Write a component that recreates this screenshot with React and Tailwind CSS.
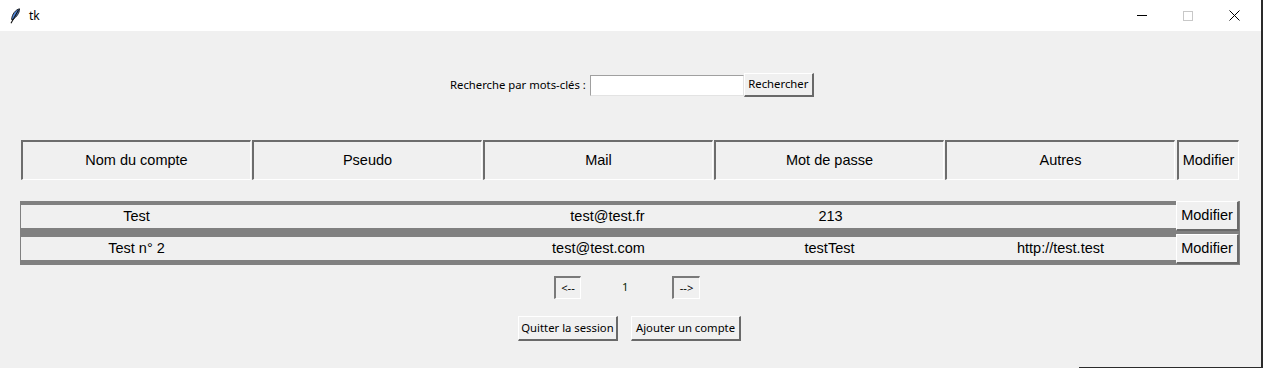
import React from 'react';

const ui = { fontFamily: '"Noto Sans", "Open Sans", sans-serif' };
const arial = { fontFamily: '"Liberation Sans", Arial, sans-serif' };

const columns = ['Nom du compte', 'Pseudo', 'Mail', 'Mot de passe', 'Autres'];

const rows = [
  { cells: ['Test', '', 'test@test.fr', '213', ''], shift: [0, 0, 18, 2, 0] },
  { cells: ['Test n° 2', '', 'test@test.com', 'testTest', 'http://test.test'], shift: [0, 0, 0, 0, 0] },
];

function Feather() {
  return (
    <svg width="12" height="16" viewBox="0 0 12 16">
      <path d="M10.5 0.8 C6.5 1.8 3 6 2.6 11.5 L4.2 11.5 C7.5 8.5 10.5 5.5 10.5 0.8 Z" fill="#4f86d8" stroke="#111" strokeWidth="0.9" />
      <path d="M9.5 2 L2 15.2" stroke="#111" strokeWidth="1.1" />
    </svg>
  );
}

function RaisedButton({ children, className = '' }) {
  return (
    <div
      className={`flex items-center justify-center whitespace-nowrap bg-[#f0f0f0] border-t border-l border-white border-r-2 border-b-2 border-r-[#696969] border-b-[#696969] text-[11.3px] text-black ${className}`}
      style={ui}
    >
      {children}
    </div>
  );
}

function SunkenButton({ children, className = '' }) {
  return (
    <div
      className={`flex items-center justify-center whitespace-nowrap bg-[#f0f0f0] border-t-2 border-l-2 border-[#7a7a7a] border-r border-b border-r-white border-b-white text-[11.3px] text-black ${className}`}
      style={ui}
    >
      {children}
    </div>
  );
}

export default function App() {
  return (
    <div className="w-[1263px] h-[368px] flex flex-col bg-[#f0f0f0] overflow-hidden">
      <div className="flex flex-1">
        <div className="w-[1261px] flex flex-col">
          {/* title bar */}
          <div className="h-[31px] bg-white flex items-center">
            <div className="ml-[8px] w-[13px] flex justify-center">
              <Feather />
            </div>
            <span className="ml-[8px] text-[12px] text-black" style={ui}>tk</span>
            <div className="ml-auto flex h-full">
              <div className="w-[46px] flex items-center justify-center">
                <div className="w-[10px] h-[1px] bg-black" />
              </div>
              <div className="w-[46px] flex items-center justify-center">
                <div className="w-[10px] h-[10px] border border-[#c8c8c8]" />
              </div>
              <div className="w-[46px] flex items-center justify-center">
                <svg width="11" height="11" viewBox="0 0 11 11">
                  <path d="M0.5 0.5 L10.5 10.5 M10.5 0.5 L0.5 10.5" stroke="#000" strokeWidth="1" />
                </svg>
              </div>
              <div className="w-[4px]" />
            </div>
          </div>

          {/* content */}
          <div className="flex-1 flex flex-col">
            {/* search */}
            <div className="mt-[42px] h-[24px] flex items-center pl-[450px]">
              <span className="text-[11.3px] text-black mr-[4px] whitespace-nowrap" style={ui}>Recherche par mots-clés :</span>
              <div className="w-[154px] h-[21px] bg-white border-t border-l border-[#a0a0a0] border-r border-b border-r-[#e3e3e3] border-b-[#e3e3e3]" />
              <RaisedButton className="w-[70px] h-[24px]">Rechercher</RaisedButton>
            </div>

            {/* header */}
            <div className="mt-[43px] h-[40px] flex pl-[21px]">
              {columns.map((c) => (
                <div
                  key={c}
                  className="w-[230px] mr-[1px] h-full flex items-center justify-center border-t-2 border-l-2 border-[#6d6d6d] border-r border-b border-r-white border-b-white text-[14.5px] text-black"
                  style={arial}
                >
                  {c}
                </div>
              ))}
              <div
                className="w-[62px] ml-[1px] h-full flex items-center justify-center border-t-2 border-l-2 border-[#6d6d6d] border-r border-b border-r-white border-b-white text-[14.5px] text-black"
                style={arial}
              >
                Modifier
              </div>
            </div>

            {/* rows */}
            <div className="mt-[21px] ml-[20px] w-[1220px] bg-[#808080] flex flex-col pl-[1px] pr-[1px]">
              {rows.map((r, i) => (
                <div key={i} className="h-[32px] flex">
                  <div className="w-[1155px] h-[23px] mt-[4px] bg-[#f0f0f0] flex">
                    {r.cells.map((t, j) => (
                      <div
                        key={j}
                        className="w-[231px] flex items-center justify-center text-[14.5px] text-black"
                        style={{ ...arial, paddingLeft: r.shift[j] }}
                      >
                        {t}
                      </div>
                    ))}
                  </div>
                  <RaisedButton className={`w-[63px] h-[30px] ${i === 1 ? 'mt-[1px]' : ''}`}>
                    <span style={arial} className="text-[14.5px]">Modifier</span>
                  </RaisedButton>
                </div>
              ))}
            </div>

            {/* pagination */}
            <div className="mt-[11px] h-[23px] flex items-center pl-[554px]">
              <SunkenButton className="w-[27px] h-[23px]">&lt;--</SunkenButton>
              <span className="ml-[41px] w-[10px] text-[11.3px] text-[#0a2a0a]" style={ui}>1</span>
              <SunkenButton className="ml-[40px] w-[28px] h-[23px]">--&gt;</SunkenButton>
            </div>

            {/* actions */}
            <div className="mt-[17px] h-[25px] flex pl-[518px]">
              <RaisedButton className="w-[100px] h-[25px]">Quitter la session</RaisedButton>
              <RaisedButton className="ml-[13px] w-[110px] h-[25px]">Ajouter un compte</RaisedButton>
            </div>
          </div>
        </div>
        <div className="w-[2px] bg-[#2b2b2b]" />
      </div>
      <div className="h-[1px] flex">
        <div className="w-[1079px]" />
        <div className="flex-1 bg-[#2b2b2b]" />
      </div>
    </div>
  );
}
